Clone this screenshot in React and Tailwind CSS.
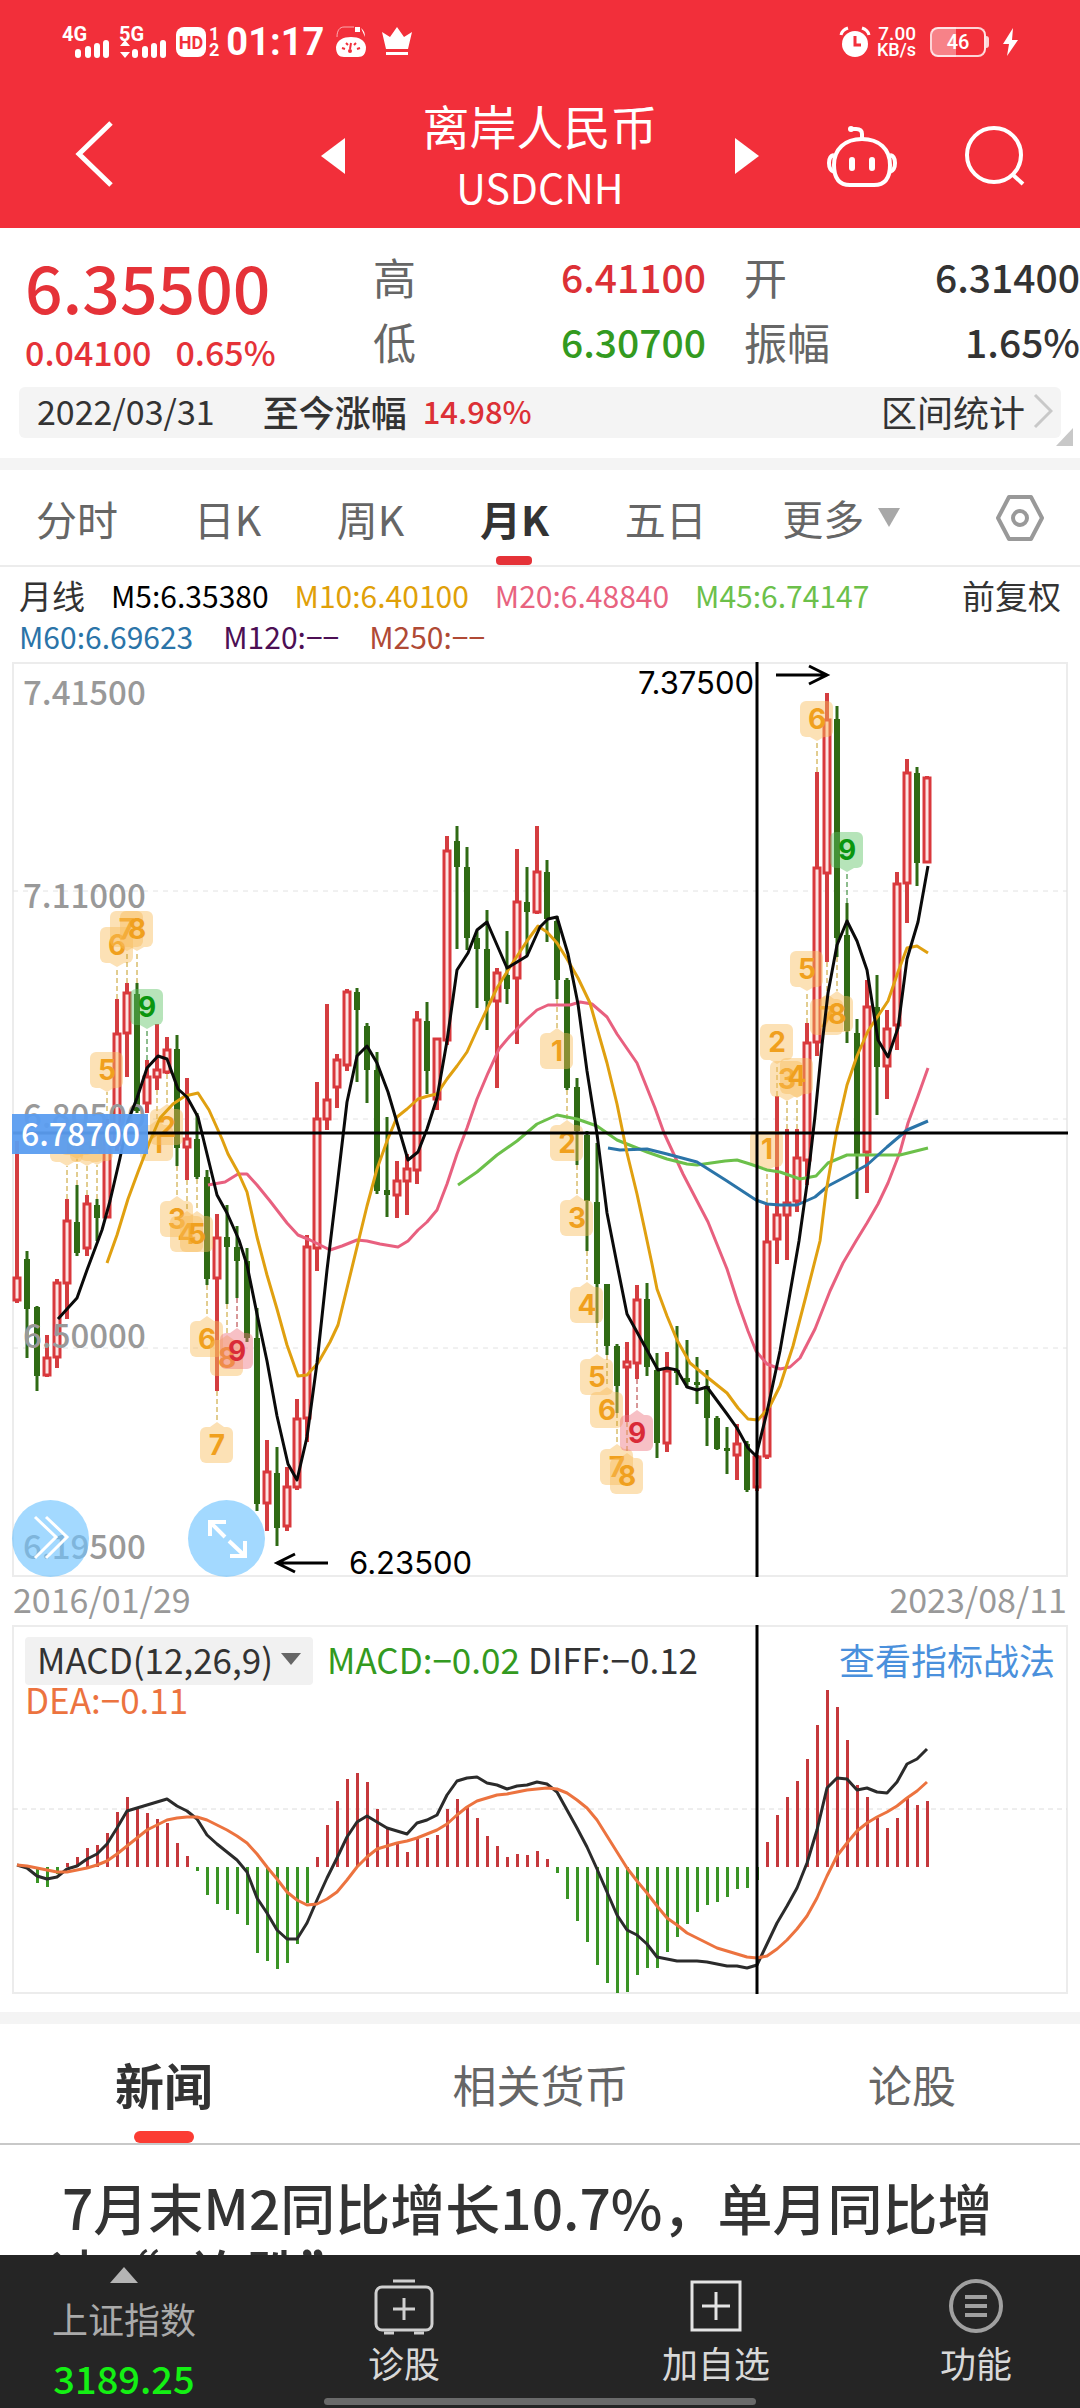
import React from 'react';

// [high, bodyTop, bodyBottom, low, rising]
const CANDLES = [
    [1140, 1276, 1300, 1302, 1], [1250, 1258, 1308, 1357, 0], [1305, 1306, 1375, 1390, 0], [1334, 1356, 1375, 1376, 1],
    [1278, 1281, 1357, 1367, 1], [1198, 1219, 1283, 1318, 1], [1184, 1221, 1252, 1255, 0], [1194, 1202, 1248, 1255, 1],
    [1198, 1204, 1217, 1240, 0], [1118, 1125, 1217, 1217, 1], [998, 1032, 1145, 1150, 1], [982, 991, 1033, 1076, 1],
    [982, 993, 1110, 1112, 0], [1059, 1075, 1103, 1112, 1], [1023, 1068, 1077, 1089, 1], [1036, 1048, 1072, 1073, 1],
    [1034, 1048, 1147, 1165, 0], [1077, 1137, 1147, 1179, 1], [1112, 1138, 1176, 1178, 0], [1169, 1176, 1278, 1284, 0],
    [1213, 1236, 1278, 1390, 1], [1204, 1236, 1246, 1303, 0], [1225, 1246, 1260, 1297, 0], [1247, 1260, 1337, 1341, 0],
    [1307, 1337, 1503, 1510, 0], [1439, 1470, 1503, 1530, 1], [1446, 1472, 1527, 1545, 0], [1466, 1485, 1526, 1530, 1],
    [1398, 1417, 1487, 1489, 1], [1234, 1245, 1418, 1441, 1], [1081, 1117, 1248, 1270, 1], [1003, 1098, 1119, 1129, 1],
    [1053, 1058, 1087, 1107, 1], [988, 990, 1065, 1070, 1], [987, 991, 1009, 1081, 0], [1022, 1025, 1069, 1102, 0],
    [1051, 1069, 1190, 1193, 0], [1116, 1189, 1194, 1216, 0], [1160, 1179, 1195, 1217, 1], [1153, 1167, 1181, 1214, 1],
    [1010, 1018, 1170, 1183, 1], [1001, 1020, 1070, 1093, 0], [1037, 1037, 1099, 1109, 1], [835, 849, 1040, 1044, 1],
    [825, 840, 866, 948, 0], [846, 866, 937, 949, 0], [930, 937, 948, 1007, 0], [909, 948, 1000, 1029, 0],
    [967, 971, 1001, 1087, 1], [930, 974, 988, 1003, 0], [848, 900, 978, 1043, 1], [866, 901, 911, 955, 0],
    [825, 870, 912, 913, 1], [859, 871, 918, 941, 0], [915, 920, 979, 998, 0], [977, 979, 1087, 1089, 0],
    [1077, 1086, 1130, 1164, 0], [1130, 1134, 1200, 1250, 0], [1142, 1201, 1283, 1322, 0], [1283, 1283, 1345, 1354, 0],
    [1343, 1345, 1385, 1412, 0], [1341, 1360, 1367, 1421, 1], [1284, 1298, 1363, 1378, 1], [1282, 1298, 1366, 1375, 0],
    [1352, 1369, 1442, 1457, 0], [1351, 1369, 1443, 1451, 1], [1325, 1369, 1372, 1384, 0], [1339, 1377, 1381, 1387, 0],
    [1356, 1381, 1384, 1403, 0], [1369, 1385, 1417, 1445, 0], [1415, 1417, 1448, 1449, 0], [1426, 1447, 1450, 1473, 0],
    [1423, 1442, 1455, 1479, 1], [1440, 1443, 1489, 1491, 0], [1454, 1455, 1487, 1490, 1], [1202, 1240, 1456, 1458, 1],
    [1095, 1213, 1239, 1263, 1], [1128, 1201, 1215, 1259, 1], [1128, 1156, 1201, 1211, 1], [1022, 1041, 1160, 1184, 1],
    [771, 866, 1042, 1055, 1], [692, 718, 873, 961, 1], [705, 718, 937, 956, 0], [902, 934, 1030, 1042, 0],
    [1018, 1032, 1155, 1198, 0], [979, 1005, 1152, 1192, 1], [974, 1006, 1066, 1114, 0], [1009, 1027, 1066, 1098, 1],
    [871, 882, 1025, 1049, 1], [758, 771, 883, 922, 1], [766, 772, 862, 885, 0], [775, 776, 862, 862, 1],
];

const M5 = '58,1318 77,1297 87,1269 102,1229 110,1200 120,1157 128,1120 137,1097 147,1067 158,1055 167,1058 178,1088 187,1096 198,1116 217,1194 227,1212 239,1239 247,1264 257,1313 267,1360 277,1415 288,1463 297,1479 307,1436 317,1362 327,1269 337,1186 347,1101 357,1055 367,1045 377,1062 388,1091 398,1125 408,1159 418,1151 427,1128 437,1097 447,1040 457,969 468,952 477,929 487,921 507,967 527,955 540,926 548,918 557,916 568,953 578,1003 587,1070 597,1133 607,1212 617,1263 627,1313 658,1369 667,1367 677,1369 687,1386 697,1389 707,1386 727,1413 737,1427 748,1447 756,1455 767,1411 780,1350 799,1240 808,1176 815,1115 822,1044 828,992 837,944 847,920 857,940 867,969 873,1007 878,1039 888,1056 898,1027 907,958 918,921 928,865';
const M10 = '107,1262 117,1234 128,1198 138,1171 150,1140 160,1117 173,1103 185,1095 198,1092 209,1109 222,1138 228,1153 238,1171 247,1191 257,1236 267,1274 277,1308 287,1344 298,1375 307,1374 318,1362 330,1341 338,1324 348,1283 367,1205 377,1168 387,1140 397,1116 407,1108 418,1098 428,1095 437,1093 447,1078 457,1065 467,1051 477,1029 487,1008 497,987 510,966 527,940 538,925 547,931 557,942 567,958 578,977 590,1002 597,1027 607,1062 617,1103 627,1152 637,1193 645,1230 652,1263 657,1288 667,1315 677,1339 690,1362 707,1376 727,1392 738,1407 748,1418 758,1419 770,1405 780,1385 793,1345 806,1295 820,1240 826,1191 837,1128 847,1084 857,1055 868,1030 878,1015 888,1000 898,971 907,947 917,945 928,952';
const M20 = '208,1184 225,1181 238,1173 247,1173 257,1184 270,1200 287,1222 298,1234 310,1239 330,1249 342,1245 357,1239 367,1240 380,1243 398,1246 408,1240 418,1229 427,1221 437,1209 447,1183 457,1153 467,1127 477,1098 488,1072 499,1048 510,1035 527,1018 537,1009 548,1004 570,1004 580,1001 592,1003 607,1016 617,1033 637,1062 647,1087 655,1107 664,1132 683,1173 708,1221 727,1268 738,1302 748,1330 756,1350 767,1363 780,1368 790,1366 800,1357 815,1328 830,1290 843,1262 856,1240 867,1222 878,1203 888,1182 900,1151 908,1122 918,1095 928,1067';
const M45 = '458,1184 477,1171 497,1154 517,1140 537,1123 557,1114 577,1118 597,1125 617,1139 647,1151 667,1158 687,1163 697,1164 725,1160 737,1159 750,1163 767,1169 780,1171 800,1178 816,1175 828,1162 847,1154 900,1154 928,1147';
const M60 = '608,1147 620,1149 647,1148 667,1153 697,1161 727,1180 756,1199 767,1203 780,1204 797,1204 815,1196 828,1185 847,1175 867,1164 887,1146 907,1129 928,1120';

// [candle index, tip y, digit, side, tone]
const MARKS = [
    [5, 1165, 1, 'up'], [6, 1158, 2, 'up'], [7, 1165, 3, 'up'], [8, 1164, 4, 'up'], [9, 1091, 5, 'up'],
    [10, 966, 6, 'up'], [11, 950, 7, 'up'], [12, 950, 8, 'up'], [13, 1028, 9, 'up', 'green'],
    [14, 1119, 1, 'down'], [15, 1103, 2, 'down'], [16, 1195, 3, 'down'], [17, 1210, 4, 'down'], [18, 1210, 5, 'down'],
    [19, 1315, 6, 'down'], [20, 1421, 7, 'down'], [21, 1334, 8, 'down'], [22, 1327, 9, 'down', 'red'],
    [54, 1027, 1, 'down'], [55, 1119, 2, 'down'], [56, 1194, 3, 'down'], [57, 1281, 4, 'down'], [58, 1353, 5, 'down'],
    [59, 1386, 6, 'down'], [60, 1443, 7, 'down'], [61, 1452, 8, 'down'], [62, 1409, 9, 'down', 'red'],
    [75, 1170, 1, 'up'], [76, 1063, 2, 'up'], [77, 1100, 3, 'up'], [78, 1097, 4, 'up'], [79, 990, 5, 'up'],
    [80, 740, 6, 'up'], [81, 993, 7, 'down'], [82, 990, 8, 'down'], [83, 871, 9, 'up', 'green'],
];

const TONES = {
    orange: { box: '#f9bd5c', text: '#f0a01e', dash: '#c49a20' },
    green: { box: '#5fc465', text: '#0a960f', dash: '#1c7a1c' },
    red: { box: '#ee7480', text: '#d92a38', dash: '#b03030' },
};

const MACD_BARS = [
    1866, 1868, 1882, 1886, 1873, 1862, 1856, 1847, 1844, 1832, 1811, 1796, 1807, 1812, 1818, 1822, 1842, 1855, 1870, 1894,
    1903, 1909, 1913, 1924, 1952, 1960, 1968, 1962, 1943, 1902, 1856, 1824, 1800, 1778, 1772, 1781, 1808, 1828, 1842, 1851,
    1836, 1837, 1834, 1808, 1798, 1806, 1817, 1835, 1845, 1856, 1853, 1854, 1850, 1858, 1872, 1898, 1920, 1941, 1964, 1982,
    1992, 1991, 1974, 1967, 1967, 1951, 1936, 1923, 1911, 1904, 1901, 1896, 1888, 1887, 1879, 1841, 1814, 1796, 1780, 1758,
    1724, 1689, 1706, 1739, 1784, 1796, 1817, 1827, 1817, 1797, 1804, 1800,
];
const DIFF = [
    1864, 1867, 1875, 1878, 1876, 1868, 1865, 1858, 1853, 1843, 1827, 1810, 1807, 1804, 1801, 1798, 1805, 1810, 1818, 1834,
    1843, 1851, 1859, 1871, 1897, 1912, 1929, 1938, 1938, 1922, 1899, 1877, 1857, 1836, 1821, 1815, 1821, 1827, 1830, 1833,
    1822, 1819, 1814, 1794, 1780, 1777, 1776, 1782, 1784, 1788, 1785, 1784, 1781, 1783, 1791, 1809, 1827, 1846, 1868, 1891,
    1914, 1929, 1934, 1943, 1956, 1958, 1960, 1960, 1960, 1961, 1963, 1965, 1965, 1967, 1964, 1943, 1922, 1905, 1887, 1862,
    1829, 1787, 1777, 1778, 1789, 1787, 1791, 1792, 1781, 1763, 1758, 1748,
];
const DEA = [
    1864, 1865, 1867, 1869, 1871, 1871, 1869, 1867, 1864, 1860, 1853, 1845, 1837, 1829, 1824, 1819, 1817, 1816, 1816, 1819,
    1824, 1829, 1835, 1842, 1853, 1866, 1878, 1891, 1899, 1904, 1903, 1898, 1891, 1879, 1866, 1856, 1848, 1845, 1842, 1840,
    1837, 1833, 1829, 1823, 1814, 1806, 1800, 1797, 1794, 1793, 1791, 1789, 1788, 1787, 1788, 1792, 1799, 1807, 1819, 1835,
    1851, 1867, 1880, 1892, 1905, 1917, 1924, 1932, 1937, 1942, 1947, 1950, 1953, 1956, 1957, 1955, 1948, 1939, 1928, 1915,
    1897, 1875, 1855, 1842, 1830, 1822, 1816, 1811, 1805, 1797, 1790, 1781,
];
const ZERO = 1866;

const xAt = (i) => 17 + i * 10;
const toPoints = (serie) => serie.map((y, i) => `${xAt(i)},${y}`).join(' ');

const Signal = ({ label, arrows }) => (
    <span className="relative block w-[50px] h-8 text-white">
        <span className="absolute left-0 top-0 text-[20px] leading-[16px] font-bold">{label}</span>
        <svg className="absolute left-0 bottom-0 w-[50px] h-[18px]" viewBox="0 0 50 18" fill="currentColor">
            {arrows && <path d="M6 0l5 6H1zM6 18l5-6H1z" />}
            <rect x="13" y="9" width="6" height="9" rx="3" />
            <rect x="23" y="6" width="6" height="12" rx="3" />
            <rect x="32" y="3" width="6" height="15" rx="3" />
            <rect x="41" y="0" width="6" height="18" rx="3" />
        </svg>
    </span>
);

const StatusBar = () => (
    <div className="flex items-start justify-between pt-[26px] pl-[62px] pr-[62px] h-[84px] font-[Roboto,sans-serif]">
        <div className="flex items-center gap-[7px]">
            <Signal label="4G" />
            <Signal label="5G" arrows />
            <div className="flex items-center gap-[3px] font-bold">
                <span className="flex items-center justify-center w-[30px] h-[30px] rounded-lg bg-white text-[#f22f3a] text-[18px]">HD</span>
                <span className="flex flex-col text-[18px] leading-[16px]"><span>1</span><span>2</span></span>
            </div>
            <span className="text-[38px] leading-8 font-bold">01:17</span>
            <svg className="w-8 h-8 ml-1" viewBox="0 0 32 32">
                <path d="M2 11C2 4 5 1 9 1h10" fill="none" stroke="#fff" strokeWidth="1" opacity=".6" />
                <path d="M20 1h5v5h-5zM26 2q4 3 4 9" fill="#fff" />
                <path d="M1 21C2 14 8 11 16 11s14 3 15 10c0 7-3 10-8 10H9c-5 0-8-3-8-10z" fill="#fff" />
                <path d="M7 22l3 1M11 17l2 2M21 17l-2 2M25 22l-3 1M16 17l-1 6" stroke="#f22f3a" strokeWidth="2" />
                <circle cx="15" cy="25" r="2" fill="#f22f3a" />
            </svg>
            <svg className="w-8 h-8 ml-[7px]" viewBox="0 0 32 32" fill="#fff">
                <path d="M1 6l8 5 7-10 7 10 8-5-4 17H5zM5 26h22v3H5z" />
            </svg>
        </div>
        <div className="flex items-center gap-[6px] font-medium">
            <svg className="w-8 h-8" viewBox="0 0 32 32">
                <circle cx="16" cy="18" r="13" fill="#fff" />
                <path d="M2 9q1-5 7-7M30 9q-1-5-7-7" fill="none" stroke="#fff" strokeWidth="3" />
                <path d="M16 10v9h6" fill="none" stroke="#f22f3a" strokeWidth="3" />
            </svg>
            <span className="flex flex-col items-end text-[19px] leading-4"><span>7.00</span><span className="text-[18px]">KB/s</span></span>
            <span className="flex items-center ml-2">
                <span className="flex items-center justify-center w-14 h-[30px] rounded-lg border-2 border-white/80 bg-linear-to-r from-white/40 from-46% to-transparent to-46% text-[20px]">46</span>
                <span className="w-[3px] h-3 bg-white/80 rounded-r" />
            </span>
            <svg className="w-[15px] h-7 ml-2" viewBox="0 0 15 28" fill="#fff"><path d="M10 0L0 16h6L4 28l11-16H9z" /></svg>
        </div>
    </div>
);

const Header = () => (
    <header className="bg-[#f22f3a] text-white">
        <StatusBar />
        <div className="grid grid-cols-[1fr_auto_1fr] items-center h-36">
            <button aria-label="返回" className="justify-self-start pl-[74px]">
                <svg className="w-10 h-[68px] -mt-1" viewBox="0 0 40 68" fill="none" stroke="#fff" strokeWidth="5"><path d="M37 3L5 34l32 31" /></svg>
            </button>
            <div className="flex items-center justify-between w-[438px]">
                <button aria-label="上一个">
                    <svg className="w-6 h-9" viewBox="0 0 24 36" fill="#fff"><path d="M24 0v36L0 18z" /></svg>
                </button>
                <h1 className="flex flex-col items-center">
                    <span className="text-[47px] leading-[60px]">离岸人民币</span>
                    <span className="text-[41px] leading-[62px]">USDCNH</span>
                </h1>
                <button aria-label="下一个">
                    <svg className="w-6 h-9" viewBox="0 0 24 36" fill="#fff"><path d="M0 0v36l24-18z" /></svg>
                </button>
            </div>
            <div className="flex items-center justify-end gap-[68px] pr-[55px]">
                <button aria-label="智能助手">
                    <svg className="w-[70px] h-16" viewBox="0 0 70 64" fill="none" stroke="#fff" strokeWidth="4">
                        <path d="M35 15V10q0-5-6-5h-4" strokeLinecap="round" />
                        <circle cx="24" cy="5" r="3" fill="#fff" stroke="none" />
                        <path d="M35 15c17 0 28 10 28 26 0 14-6 20-16 20H23C13 61 7 55 7 41c0-16 11-26 28-26z" />
                        <path d="M7 31q-5 1-5 8t5 9M63 31q5 1 5 8t-5 9" />
                        <path d="M25 36v8M45 36v8" strokeWidth="6" strokeLinecap="round" />
                    </svg>
                </button>
                <button aria-label="搜索">
                    <svg className="w-[60px] h-[60px]" viewBox="0 0 60 60" fill="none" stroke="#fff" strokeWidth="4"><circle cx="29" cy="29" r="27" /><path d="M47 48l11 10" /></svg>
                </button>
            </div>
        </div>
    </header>
);

const Stat = ({ label, value, tone }) => (
    <div className="flex items-center justify-between h-[65px]">
        <dt className="text-[43px] leading-[60px] text-[#666]">{label}</dt>
        <dd className={`text-[39px] leading-[60px] font-medium ${tone}`}>{value}</dd>
    </div>
);

const Quote = () => (
    <section className="bg-white pt-[15px] pb-5 border-b-12 border-[#f4f4f4]">
        <div className="grid grid-cols-[373fr_333fr_38fr_336fr]">
            <div className="pl-[25px] text-[#e53238]">
                <p className="text-[66px] leading-[84px] font-medium">6.35500</p>
                <p className="flex gap-6 text-[34px] leading-[50px] font-medium whitespace-nowrap"><span>0.04100</span><span>0.65%</span></p>
            </div>
            <dl>
                <Stat label="高" value="6.41100" tone="text-[#dc3036]" />
                <Stat label="低" value="6.30700" tone="text-[#339a20]" />
            </dl>
            <span />
            <dl>
                <Stat label="开" value="6.31400" tone="text-[#333]" />
                <Stat label="振幅" value="1.65%" tone="text-[#333]" />
            </dl>
        </div>
        <div className="relative mt-[10px] mx-[19px]">
            <div className="flex items-center h-[51px] pl-[18px] pr-2 pb-1 rounded-md bg-[#f4f4f4] text-[#333] leading-[44px]">
                <span className="text-[34px]">2022/03/31</span>
                <span className="ml-12 text-[36px] font-medium">至今涨幅</span>
                <span className="ml-4 text-[31px] text-[#dc3036] font-medium">14.98%</span>
                <button className="flex items-center gap-2 ml-auto text-[36px]">
                    区间统计
                    <svg className="w-5 h-9" viewBox="0 0 20 36" fill="none" stroke="#c8c8c8" strokeWidth="3"><path d="M2 2l16 16L2 34" /></svg>
                </button>
            </div>
            <svg className="absolute -right-3 -bottom-2 w-[17px] h-[18px]" viewBox="0 0 17 18" fill="#c8c8c8"><path d="M17 0v18H0z" /></svg>
        </div>
    </section>
);

const PERIODS = ['分时', '日K', '周K', '月K', '五日'];

const PeriodTabs = () => (
    <nav className="flex items-start justify-between h-[97px] px-9 border-b-2 border-[#ececec] text-[41px] leading-[94px] text-[#666] whitespace-nowrap">
        {PERIODS.map((p) => (
            <button key={p} className={p === '月K' ? 'relative h-full font-bold text-[#333]' : 'h-full'}>
                {p}
                {p === '月K' && <span className="absolute left-1/2 -translate-x-1/2 bottom-0 w-9 h-[9px] rounded bg-[#e53238]" />}
            </button>
        ))}
        <button className="flex items-center gap-[14px]">
            更多
            <svg className="w-[22px] h-[19px]" viewBox="0 0 22 19" fill="#a8a8a8"><path d="M0 0h22L11 19z" /></svg>
        </button>
        <button aria-label="设置" className="self-center ml-5">
            <svg className="w-12 h-12" viewBox="0 0 48 48" fill="none" stroke="#999" strokeWidth="4" strokeLinejoin="round">
                <path d="M13 3h22l11 21-11 21H13L2 24z" /><circle cx="24" cy="24" r="7" />
            </svg>
        </button>
    </nav>
);

const Legend = () => (
    <div className="flex items-start justify-between px-[19px] pt-2 pb-[5px] text-[30px] leading-[41px] text-[#333]">
        <div>
            <div className="flex gap-[26px] whitespace-nowrap">
                <span className="text-[33px]">月线</span>
                <span className="text-black">M5:6.35380</span>
                <span className="text-[#e0a008]">M10:6.40100</span>
                <span className="text-[#e8637f]">M20:6.48840</span>
                <span className="text-[#6cc04a]">M45:6.74147</span>
            </div>
            <div className="flex gap-[30px] whitespace-nowrap">
                <span className="text-[#2b74a8]">M60:6.69623</span>
                <span className="text-[#4d0f54]">M120:−−</span>
                <span className="text-[#b04a35]">M250:−−</span>
            </div>
        </div>
        <button className="text-[33px]">前复权</button>
    </div>
);

const Candle = ({ i, c }) => {
    const [high, top, bottom, low, rising] = c;
    const x = xAt(i);
    if (!rising) return (
        <g fill="#2f6a14">
            <rect x={x - 1.5} y={high} width="3" height={low - high} />
            <rect x={x - 3} y={top} width="6" height={Math.max(3, bottom - top)} />
        </g>
    );
    return (
        <g>
            <rect x={x - 2} y={high} width="4" height={low - high} fill="#d43d40" />
            <rect x={x - 3} y={top + 1} width="6" height={Math.max(2, bottom - top - 2)} fill="#fbe3e1" stroke="#d9383c" strokeWidth="3" />
        </g>
    );
};

const Mark = ({ m }) => {
    const [i, tip, digit, side, tone = 'orange'] = m;
    const x = xAt(i);
    const t = TONES[tone];
    const up = side === 'up';
    const top = up ? tip - 40 : tip + 5;
    const edge = up ? CANDLES[i][0] : CANDLES[i][3];
    return (
        <g>
            <line x1={x} x2={x} y1={edge} y2={tip} stroke={t.dash} strokeWidth="1" strokeDasharray="5 3" />
            <g fill={t.box} opacity="0.45">
                <rect x={x - 17} y={top} width="33" height="36" rx="6" />
                <path d={up ? `M${x - 7} ${tip - 4}h14L${x} ${tip}z` : `M${x - 7} ${tip + 5}h14L${x} ${tip}z`} />
            </g>
            <text x={x} y={up ? tip - 12 : tip + 33} textAnchor="middle" fill={t.text} className="text-[28px] font-bold font-[Inter,sans-serif]">{digit}</text>
        </g>
    );
};

const AXIS = [['7.41500', 704], ['7.11000', 907], ['6.80500', 1127], ['6.50000', 1347], ['6.19500', 1558]];

const KLine = () => (
    <div className="relative mx-3">
        <svg className="block w-full" viewBox="12 661 1056 915" role="img" aria-label="月K线图">
            <rect x="13" y="662" width="1054" height="913" fill="none" stroke="#ececec" strokeWidth="2" />
            {[890, 1118, 1347].map((y) => <line key={y} x1="13" x2="1067" y1={y} y2={y} stroke="#e2e2e2" strokeDasharray="5 5" />)}
            {CANDLES.map((c, i) => <Candle key={i} i={i} c={c} />)}
            {AXIS.map(([label, y]) => <text key={label} x="23" y={y} fill="#999" className="text-[33px] font-medium">{label}</text>)}
            {MARKS.map((m) => <Mark key={m[0]} m={m} />)}
            <g fill="none" strokeWidth="3" strokeLinejoin="round">
                <polyline points={M20} stroke="#e8607f" />
                <polyline points={M45} stroke="#6cc04a" />
                <polyline points={M60} stroke="#2b74a8" />
                <polyline points={M10} stroke="#e0a010" />
                <polyline points={M5} stroke="#0a0a0a" />
            </g>
            {/* 十字光标 */}
            <path d="M13 1132H1068M757 661V1576" stroke="#000" strokeWidth="3" />
            <rect x="12" y="1113" width="136" height="40" fill="#5b9df0" opacity="0.95" />
            <text x="21" y="1145" fill="#fff" className="text-[32px] font-medium">6.78700</text>
            <g fill="none" stroke="#000" strokeWidth="3">
                <path d="M776 674h50M809 665l18 9-18 9" />
                <path d="M328 1562h-50M295 1553l-18 9 18 9" />
            </g>
            <text x="754" y="693" textAnchor="end" className="text-[31px] font-[Inter,sans-serif]">7.37500</text>
            <text x="349" y="1573" className="text-[31px] font-[Inter,sans-serif]">6.23500</text>
        </svg>
        <button aria-label="展开" className="absolute left-0 bottom-0 w-[77px] h-[77px] rounded-full bg-[#71c5ff]/65">
            <svg className="w-full h-full" viewBox="0 0 77 77" fill="none" stroke="#fff" strokeWidth="3"><path d="M23 17l21 20-21 21M34 17l21 20-21 21" /></svg>
        </button>
        <button aria-label="全屏" className="absolute left-44 bottom-0 w-[77px] h-[77px] rounded-full bg-[#71c5ff]/65">
            <svg className="w-full h-full" viewBox="0 0 77 77" fill="none" stroke="#fff" strokeWidth="4"><path d="M22 36V22h16M22 22l15 15M57 41v15H42M57 56L41 41" /></svg>
        </button>
    </div>
);

const Macd = () => (
    <div className="relative mx-3">
        <svg className="block w-full" viewBox="12 1624 1056 369" role="img" aria-label="MACD">
            <rect x="13" y="1625" width="1054" height="367" fill="none" stroke="#ececec" strokeWidth="2" />
            <line x1="13" x2="1067" y1="1808" y2="1808" stroke="#dcdcdc" strokeDasharray="5 4" />
            {MACD_BARS.map((y, i) => (
                <rect key={i} x={xAt(i) - 1} y={Math.min(y, ZERO)} width="3" height={Math.abs(y - ZERO)} fill={y < ZERO ? '#c5383c' : '#3a9425'} />
            ))}
            <g fill="none" strokeWidth="3" strokeLinejoin="round">
                <polyline points={toPoints(DIFF)} stroke="#2b2b2b" />
                <polyline points={toPoints(DEA)} stroke="#ec733f" />
            </g>
            <path d="M757 1624V1993" stroke="#000" strokeWidth="3" />
        </svg>
        <div className="absolute inset-x-0 top-3 flex items-start justify-between pl-[13px] pr-[13px] text-[35px] leading-[44px] text-[#333] whitespace-nowrap">
            <div>
                <div className="flex items-start">
                    <button className="flex items-center gap-2 h-12 px-3 pb-1 mr-[14px] rounded bg-[#f1f1f1]">
                        MACD(12,26,9)
                        <svg className="w-5 h-3" viewBox="0 0 20 12" fill="#666"><path d="M0 0h20L10 12z" /></svg>
                    </button>
                    <span className="mr-2 text-[#339a20]">MACD:−0.02</span>
                    <span>DIFF:−0.12</span>
                </div>
                <p className="leading-7 text-[#ec733f]">DEA:−0.11</p>
            </div>
            <a href="#strategy" className="text-[36px] text-[#4a90dc]">查看指标战法</a>
        </div>
    </div>
);

const News = () => (
    <section className="mt-[18px] border-t-12 border-[#f4f4f4]">
        <nav className="flex items-center justify-between h-[121px] pl-[115px] pr-[124px] border-b-2 border-[#c8c8c8] text-[44px] text-[#666]">
            <button className="relative h-full text-[49px] font-bold text-[#333]">
                新闻
                <span className="absolute left-1/2 -translate-x-1/2 bottom-0 w-15 h-3 rounded-md bg-[#fb3c33]" />
            </button>
            <button>相关货币</button>
            <button>论股</button>
        </nav>
        <h2 className="pt-7 px-[50px] indent-3 text-[55px] leading-[66px] font-medium text-[#333]">7月末M2同比增长10.7%，单月同比增速“7连跌”</h2>
    </section>
);

const BottomBar = () => (
    <footer className="relative flex shrink-0 h-[153px] bg-[#252525] text-[36px] leading-[44px] text-[#d8d8d8]">
        <button className="flex-[248] flex flex-col items-center pt-3 text-[#aaa]">
            <svg className="w-7 h-4" viewBox="0 0 28 16" fill="#b4b4b4"><path d="M14 0l14 16H0z" /></svg>
            <span className="mt-[13px]">上证指数</span>
            <span className="mt-4 text-[38px] font-medium text-[#14f014]">3189.25</span>
        </button>
        <button className="flex-[312] flex flex-col items-center pt-6">
            <svg className="w-[60px] h-[56px]" viewBox="0 0 60 56" fill="none" stroke="#d0d0d0" strokeWidth="3">
                <path d="M19 2h22" /><rect x="2" y="8" width="56" height="43" rx="6" /><path d="M10 54h10M40 54h10M30 19v22M19 30h22" />
            </svg>
            <span className="mt-[5px]">诊股</span>
        </button>
        <button className="flex-[312] flex flex-col items-center pt-6">
            <svg className="w-[52px] h-[56px]" viewBox="0 0 52 56" fill="none" stroke="#e4e4e4" strokeWidth="3">
                <rect x="2" y="3" width="48" height="48" /><path d="M26 13v28M12 27h28" />
            </svg>
            <span className="mt-[5px]">加自选</span>
        </button>
        <button className="flex-[208] flex flex-col items-center pt-6">
            <svg className="w-14 h-14" viewBox="0 0 56 56" fill="none" stroke="#a0a0a0" strokeWidth="4">
                <circle cx="28" cy="27" r="25" /><path d="M17 18h22M17 27h22M17 36h22" />
            </svg>
            <span className="mt-[5px]">功能</span>
        </button>
        <span className="absolute left-[30%] right-[30%] bottom-[3px] h-[7px] rounded bg-[#6a6a6a]" />
    </footer>
);

export default function App() {
    return (
        <div className="flex flex-col h-screen overflow-hidden bg-white font-['Noto_Sans_CJK_SC',sans-serif]">
            <Header />
            <main className="flex-1 min-h-0 overflow-hidden">
                <Quote />
                <PeriodTabs />
                <Legend />
                <KLine />
                <div className="flex justify-between px-[13px] h-12 text-[34px] leading-[44px] text-[#999]">
                    <span>2016/01/29</span>
                    <span>2023/08/11</span>
                </div>
                <Macd />
                <News />
            </main>
            <BottomBar />
        </div>
    );
}
